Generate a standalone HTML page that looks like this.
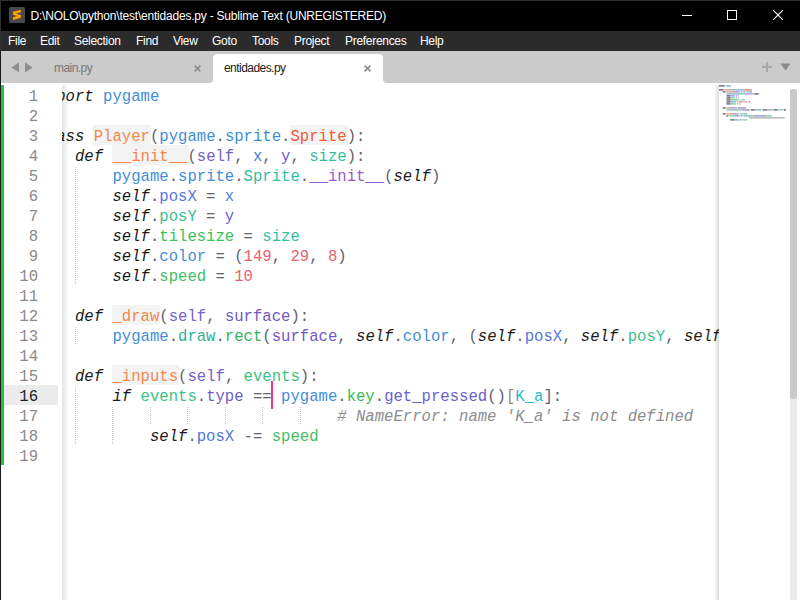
<!DOCTYPE html>
<html><head><meta charset="utf-8">
<style>
html,body{margin:0;padding:0;}
body{width:800px;height:600px;overflow:hidden;position:relative;background:#fff;font-family:"Liberation Sans",sans-serif;}
.abs{position:absolute;}
#title{position:absolute;left:0;top:0;width:800px;height:31px;background:#000;}
#menubar{position:absolute;left:0;top:31px;width:800px;height:20px;background:#2b2b2b;}
.menu{position:absolute;top:0;height:20px;line-height:21px;color:#fff;font-size:12px;letter-spacing:-0.3px;white-space:nowrap;}
#tabbar{position:absolute;left:0;top:51px;width:800px;height:32px;background:#cbcbcb;}
#editor{position:absolute;left:0;top:83px;width:800px;height:517px;background:#fff;}
.ln{position:absolute;left:37.5px;height:20px;line-height:20px;font-family:"Liberation Mono",monospace;font-size:15.625px;white-space:pre;color:#333;}
.bg{position:absolute;height:20px;background:#f3f3f3;}
.guide{position:absolute;width:1px;background:repeating-linear-gradient(to bottom,#c4c4c4 0,#c4c4c4 1px,transparent 1px,transparent 2px);}
.num{position:absolute;left:0;width:38px;text-align:right;height:20px;line-height:20px;font-family:"Liberation Mono",monospace;font-size:15.625px;color:#8a8a8a;}
.num.cur{color:#1e1e1e;}
#codeclip{position:absolute;left:62px;top:83px;width:657px;height:517px;overflow:hidden;}
#codeinner{position:absolute;left:-62px;top:-83px;width:800px;height:600px;}
</style></head>
<body>
<!-- title bar -->
<div id="title">
  <div class="abs" style="left:0;top:0;width:800px;height:1px;background:#2e2e2e"></div>
  <svg class="abs" style="left:9px;top:7px" width="16" height="16" viewBox="0 0 16 16">
    <rect x="0" y="0" width="16" height="16" rx="1.5" fill="#4a4a4a"/>
    <path d="M4 4.83 L11.83 2.67 L11.83 5.33 L7 6.67 L11.83 8 L11.83 10.67 L4 13 L4 10.17 L8 9 L4 7.83 Z" fill="#ff9f00"/>
  </svg>
  <div class="abs" style="left:30.5px;top:1px;height:31px;line-height:31px;color:#fff;font-size:12px;letter-spacing:-0.21px;white-space:nowrap">D:\NOLO\python\test\entidades.py - Sublime Text (UNREGISTERED)</div>
  <div class="abs" style="left:682px;top:15px;width:10px;height:1px;background:#fff"></div>
  <div class="abs" style="left:727px;top:10px;width:8px;height:8px;border:1px solid #fff"></div>
  <svg class="abs" style="left:773px;top:10px" width="10" height="10" viewBox="0 0 10 10"><path d="M0 0 L10 10 M10 0 L0 10" stroke="#fff" stroke-width="1.1"/></svg>
</div>
<!-- menu -->
<div id="menubar">
  <div class="menu" style="left:8px">File</div>
  <div class="menu" style="left:40px">Edit</div>
  <div class="menu" style="left:74px">Selection</div>
  <div class="menu" style="left:136px">Find</div>
  <div class="menu" style="left:173px">View</div>
  <div class="menu" style="left:212px">Goto</div>
  <div class="menu" style="left:252px">Tools</div>
  <div class="menu" style="left:294px">Project</div>
  <div class="menu" style="left:345px">Preferences</div>
  <div class="menu" style="left:420px">Help</div>
</div>
<div class="abs" style="left:0;top:0;width:1px;height:51px;background:#2e2e2e"></div>
<!-- tabs -->
<div id="tabbar">
  <div class="abs" style="left:0;top:0;width:1px;height:32px;background:#1a1a1a"></div>
  <svg class="abs" style="left:11px;top:10.5px" width="22" height="11" viewBox="0 0 22 11">
    <path d="M0.3 5.5 L8 0.5 L8 10.5 Z" fill="#8f8f8f"/>
    <path d="M14 0.5 L21.7 5.5 L14 10.5 Z" fill="#8f8f8f"/>
  </svg>
  <div class="abs" style="left:54px;top:0;height:32px;line-height:34px;color:#777;font-size:12px;letter-spacing:-0.55px">main.py</div>
  <svg class="abs" style="left:194px;top:14px" width="7" height="7" viewBox="0 0 7 7"><path d="M0.6 0.6 L6.4 6.4 M6.4 0.6 L0.6 6.4" stroke="#8f8f8f" stroke-width="1.7"/></svg>
  <!-- active tab -->
  <svg class="abs" style="left:209px;top:3px" width="178" height="29" viewBox="0 0 178 29">
    <path d="M0 29 Q4 29 4 25 L4 4 Q4 0 8 0 L170 0 Q174 0 174 4 L174 25 Q174 29 178 29 Z" fill="#fff"/>
  </svg>
  <div class="abs" style="left:224px;top:0;height:32px;line-height:34px;color:#222;font-size:12px;letter-spacing:-0.55px">entidades.py</div>
  <svg class="abs" style="left:364px;top:14px" width="7" height="7" viewBox="0 0 7 7"><path d="M0.6 0.6 L6.4 6.4 M6.4 0.6 L0.6 6.4" stroke="#8f8f8f" stroke-width="1.7"/></svg>
  <svg class="abs" style="left:762px;top:11px" width="10" height="10" viewBox="0 0 10 10"><path d="M5 0 V10 M0 5 H10" stroke="#a9a9a9" stroke-width="2"/></svg>
  <svg class="abs" style="left:780px;top:12px" width="11" height="8" viewBox="0 0 11 8"><path d="M0.5 0.5 L10.5 0.5 L5.5 7.5 Z" fill="#8a8a8a"/></svg>
</div>
<!-- editor -->
<div id="editor"></div>
<div class="abs" style="left:0;top:83px;width:1px;height:517px;background:#1a1a1a"></div>
<div class="abs" style="left:1px;top:85px;width:3px;height:380px;background:#22c23a"></div>
<div class="abs" style="left:5px;top:385px;width:53px;height:20px;background:#ebebeb"></div>
<div class="num" style="top:87px">1</div>
<div class="num" style="top:107px">2</div>
<div class="num" style="top:127px">3</div>
<div class="num" style="top:147px">4</div>
<div class="num" style="top:167px">5</div>
<div class="num" style="top:187px">6</div>
<div class="num" style="top:207px">7</div>
<div class="num" style="top:227px">8</div>
<div class="num" style="top:247px">9</div>
<div class="num" style="top:267px">10</div>
<div class="num" style="top:287px">11</div>
<div class="num" style="top:307px">12</div>
<div class="num" style="top:327px">13</div>
<div class="num" style="top:347px">14</div>
<div class="num" style="top:367px">15</div>
<div class="num cur" style="top:387px">16</div>
<div class="num" style="top:407px">17</div>
<div class="num" style="top:427px">18</div>
<div class="num" style="top:447px">19</div>
<div id="codeclip"><div id="codeinner">
<div class="abs" style="left:62px;top:85px;width:6px;height:515px;background:linear-gradient(to right,#e2e2e2,rgba(255,255,255,0))"></div>
<div class="abs" style="left:714px;top:85px;width:5px;height:515px;background:linear-gradient(to left,#dcdcdc,rgba(255,255,255,0))"></div>
<div class="ln" style="top:87px"><span style="color:#1a1a1a;font-style:italic">import</span>&#32;<span style="color:#3f8ed6">pygame</span></div>
<div class="ln" style="top:107px"></div>
<div class="bg" style="left:92.750px;top:125px;width:58.250px"></div>
<div class="bg" style="left:289.625px;top:125px;width:58.250px"></div>
<div class="ln" style="top:127px"><span style="color:#1a1a1a;font-style:italic">class</span>&#32;<span style="color:#f2884e">Player</span><span style="color:#626270">(</span><span style="color:#3f8ed6">pygame</span><span style="color:#626270">.</span><span style="color:#3f8ed6">sprite</span><span style="color:#626270">.</span><span style="color:#ef5a3a">Sprite</span><span style="color:#626270">)</span><span style="color:#626270">:</span></div>
<div class="bg" style="left:111.500px;top:145px;width:77.000px"></div>
<div class="ln" style="top:147px">&#32;&#32;&#32;&#32;<span style="color:#1a1a1a;font-style:italic">def</span>&#32;<span style="color:#f2884e">__init__</span><span style="color:#626270">(</span><span style="color:#7462c9">self</span><span style="color:#626270">,&#32;</span><span style="color:#527cda">x</span><span style="color:#626270">,&#32;</span><span style="color:#6a5bd0">y</span><span style="color:#626270">,&#32;</span><span style="color:#34bf9e">size</span><span style="color:#626270">)</span><span style="color:#626270">:</span></div>
<div class="ln" style="top:167px">&#32;&#32;&#32;&#32;&#32;&#32;&#32;&#32;<span style="color:#3f8ed6">pygame</span><span style="color:#626270">.</span><span style="color:#3f8ed6">sprite</span><span style="color:#626270">.</span><span style="color:#2fc0a2">Sprite</span><span style="color:#626270">.</span><span style="color:#9a5ad2">__init__</span><span style="color:#626270">(</span><span style="color:#1a1a1a;font-style:italic">self</span><span style="color:#626270">)</span></div>
<div class="ln" style="top:187px">&#32;&#32;&#32;&#32;&#32;&#32;&#32;&#32;<span style="color:#1a1a1a;font-style:italic">self</span><span style="color:#626270">.</span><span style="color:#5276da">posX</span><span style="color:#626270">&#32;=&#32;</span><span style="color:#527cda">x</span></div>
<div class="ln" style="top:207px">&#32;&#32;&#32;&#32;&#32;&#32;&#32;&#32;<span style="color:#1a1a1a;font-style:italic">self</span><span style="color:#626270">.</span><span style="color:#39c08e">posY</span><span style="color:#626270">&#32;=&#32;</span><span style="color:#6a5bd0">y</span></div>
<div class="ln" style="top:227px">&#32;&#32;&#32;&#32;&#32;&#32;&#32;&#32;<span style="color:#1a1a1a;font-style:italic">self</span><span style="color:#626270">.</span><span style="color:#3ac158">tilesize</span><span style="color:#626270">&#32;=&#32;</span><span style="color:#34bf9e">size</span></div>
<div class="ln" style="top:247px">&#32;&#32;&#32;&#32;&#32;&#32;&#32;&#32;<span style="color:#1a1a1a;font-style:italic">self</span><span style="color:#626270">.</span><span style="color:#3f8fd4">color</span><span style="color:#626270">&#32;=&#32;</span><span style="color:#626270">(</span><span style="color:#e8626c">149</span><span style="color:#626270">,&#32;</span><span style="color:#e8626c">29</span><span style="color:#626270">,&#32;</span><span style="color:#e8626c">8</span><span style="color:#626270">)</span></div>
<div class="ln" style="top:267px">&#32;&#32;&#32;&#32;&#32;&#32;&#32;&#32;<span style="color:#1a1a1a;font-style:italic">self</span><span style="color:#626270">.</span><span style="color:#41bf63">speed</span><span style="color:#626270">&#32;=&#32;</span><span style="color:#e8626c">10</span></div>
<div class="ln" style="top:287px"></div>
<div class="bg" style="left:111.500px;top:305px;width:48.875px"></div>
<div class="ln" style="top:307px">&#32;&#32;&#32;&#32;<span style="color:#1a1a1a;font-style:italic">def</span>&#32;<span style="color:#f2884e">_draw</span><span style="color:#626270">(</span><span style="color:#7462c9">self</span><span style="color:#626270">,&#32;</span><span style="color:#7058c4">surface</span><span style="color:#626270">)</span><span style="color:#626270">:</span></div>
<div class="ln" style="top:327px">&#32;&#32;&#32;&#32;&#32;&#32;&#32;&#32;<span style="color:#3f8ed6">pygame</span><span style="color:#626270">.</span><span style="color:#30b190">draw</span><span style="color:#626270">.</span><span style="color:#33b262">rect</span><span style="color:#626270">(</span><span style="color:#7058c4">surface</span><span style="color:#626270">,&#32;</span><span style="color:#1a1a1a;font-style:italic">self</span><span style="color:#626270">.</span><span style="color:#3f8fd4">color</span><span style="color:#626270">,&#32;</span><span style="color:#626270">(</span><span style="color:#1a1a1a;font-style:italic">self</span><span style="color:#626270">.</span><span style="color:#5276da">posX</span><span style="color:#626270">,&#32;</span><span style="color:#1a1a1a;font-style:italic">self</span><span style="color:#626270">.</span><span style="color:#39c08e">posY</span><span style="color:#626270">,&#32;</span><span style="color:#1a1a1a;font-style:italic">self</span><span style="color:#626270">.</span><span style="color:#3ac158">tilesize</span><span style="color:#626270">,&#32;</span><span style="color:#1a1a1a;font-style:italic">self</span><span style="color:#626270">.</span><span style="color:#3ac158">tilesize</span><span style="color:#626270">)</span><span style="color:#626270">)</span></div>
<div class="ln" style="top:347px"></div>
<div class="bg" style="left:111.500px;top:365px;width:67.625px"></div>
<div class="ln" style="top:367px">&#32;&#32;&#32;&#32;<span style="color:#1a1a1a;font-style:italic">def</span>&#32;<span style="color:#f2884e">_inputs</span><span style="color:#626270">(</span><span style="color:#7462c9">self</span><span style="color:#626270">,&#32;</span><span style="color:#3cc382">events</span><span style="color:#626270">)</span><span style="color:#626270">:</span></div>
<div class="ln" style="top:387px">&#32;&#32;&#32;&#32;&#32;&#32;&#32;&#32;<span style="color:#1a1a1a;font-style:italic">if</span>&#32;<span style="color:#3cc382">events</span><span style="color:#626270">.</span><span style="color:#6c60cc">type</span><span style="color:#626270">&#32;==&#32;</span><span style="color:#3f8ed6">pygame</span><span style="color:#626270">.</span><span style="color:#3dba56">key</span><span style="color:#626270">.</span><span style="color:#6a5fcf">get_pressed</span><span style="color:#626270">()</span><span style="color:#a08a6a">[</span><span style="color:#1fbcc8">K_a</span><span style="color:#626270">]</span><span style="color:#626270">:</span></div>
<div class="ln" style="top:407px">&#32;&#32;&#32;&#32;&#32;&#32;&#32;&#32;&#32;&#32;&#32;&#32;&#32;&#32;&#32;&#32;&#32;&#32;&#32;&#32;&#32;&#32;&#32;&#32;&#32;&#32;&#32;&#32;&#32;&#32;&#32;&#32;<span style="color:#8c8c8c;font-style:italic">#&#32;NameError:&#32;name&#32;&#x27;K_a&#x27;&#32;is&#32;not&#32;defined</span></div>
<div class="ln" style="top:427px">&#32;&#32;&#32;&#32;&#32;&#32;&#32;&#32;&#32;&#32;&#32;&#32;<span style="color:#1a1a1a;font-style:italic">self</span><span style="color:#626270">.</span><span style="color:#5276da">posX</span><span style="color:#626270">&#32;-=&#32;</span><span style="color:#41bf63">speed</span></div>
<div class="ln" style="top:447px"></div>
<div class="guide" style="left:75px;top:167px;height:118px"></div>
<div class="guide" style="left:75px;top:327px;height:18px"></div>
<div class="guide" style="left:75px;top:387px;height:58px"></div>
<div class="guide" style="left:112px;top:407px;height:38px"></div>
<div class="guide" style="left:150px;top:407px;height:18px"></div>
<div class="guide" style="left:187px;top:407px;height:18px"></div>
<div class="guide" style="left:225px;top:407px;height:18px"></div>
<div class="guide" style="left:262px;top:407px;height:18px"></div>
<div class="guide" style="left:300px;top:407px;height:18px"></div>
<div class="abs" style="left:271px;top:381px;width:2px;height:28px;background:#f43584"></div>
</div></div>
<!-- minimap -->
<div class="abs" style="left:719px;top:83px;width:71px;height:517px;background:#fff;overflow:hidden">
<svg class="abs" style="left:0;top:2px" width="71" height="60">
<rect x="0.00" y="0" width="5.62" height="1.7" fill="#1a1a1a" fill-opacity="0.55"/>
<rect x="6.56" y="0" width="5.62" height="1.7" fill="#3f8ed6" fill-opacity="0.55"/>
<rect x="0.00" y="4" width="4.69" height="1.7" fill="#1a1a1a" fill-opacity="0.55"/>
<rect x="5.62" y="4" width="5.62" height="2" fill="#e6e6e6"/>
<rect x="5.62" y="4" width="5.62" height="1.7" fill="#f2884e" fill-opacity="0.55"/>
<rect x="11.25" y="4" width="0.94" height="1.7" fill="#626270" fill-opacity="0.55"/>
<rect x="12.19" y="4" width="5.62" height="1.7" fill="#3f8ed6" fill-opacity="0.55"/>
<rect x="17.81" y="4" width="0.94" height="1.7" fill="#626270" fill-opacity="0.55"/>
<rect x="18.75" y="4" width="5.62" height="1.7" fill="#3f8ed6" fill-opacity="0.55"/>
<rect x="24.38" y="4" width="0.94" height="1.7" fill="#626270" fill-opacity="0.55"/>
<rect x="25.31" y="4" width="5.62" height="2" fill="#e6e6e6"/>
<rect x="25.31" y="4" width="5.62" height="1.7" fill="#ef5a3a" fill-opacity="0.55"/>
<rect x="30.94" y="4" width="0.94" height="1.7" fill="#626270" fill-opacity="0.55"/>
<rect x="31.88" y="4" width="0.94" height="1.7" fill="#626270" fill-opacity="0.55"/>
<rect x="3.75" y="6" width="2.81" height="1.7" fill="#1a1a1a" fill-opacity="0.55"/>
<rect x="7.50" y="6" width="7.50" height="2" fill="#e6e6e6"/>
<rect x="7.50" y="6" width="7.50" height="1.7" fill="#f2884e" fill-opacity="0.55"/>
<rect x="15.00" y="6" width="0.94" height="1.7" fill="#626270" fill-opacity="0.55"/>
<rect x="15.94" y="6" width="3.75" height="1.7" fill="#7462c9" fill-opacity="0.55"/>
<rect x="19.69" y="6" width="0.94" height="1.7" fill="#626270" fill-opacity="0.55"/>
<rect x="21.56" y="6" width="0.94" height="1.7" fill="#527cda" fill-opacity="0.55"/>
<rect x="22.50" y="6" width="0.94" height="1.7" fill="#626270" fill-opacity="0.55"/>
<rect x="24.38" y="6" width="0.94" height="1.7" fill="#6a5bd0" fill-opacity="0.55"/>
<rect x="25.31" y="6" width="0.94" height="1.7" fill="#626270" fill-opacity="0.55"/>
<rect x="27.19" y="6" width="3.75" height="1.7" fill="#34bf9e" fill-opacity="0.55"/>
<rect x="30.94" y="6" width="0.94" height="1.7" fill="#626270" fill-opacity="0.55"/>
<rect x="31.88" y="6" width="0.94" height="1.7" fill="#626270" fill-opacity="0.55"/>
<rect x="7.50" y="8" width="5.62" height="1.7" fill="#3f8ed6" fill-opacity="0.55"/>
<rect x="13.12" y="8" width="0.94" height="1.7" fill="#626270" fill-opacity="0.55"/>
<rect x="14.06" y="8" width="5.62" height="1.7" fill="#3f8ed6" fill-opacity="0.55"/>
<rect x="19.69" y="8" width="0.94" height="1.7" fill="#626270" fill-opacity="0.55"/>
<rect x="20.62" y="8" width="5.62" height="1.7" fill="#2fc0a2" fill-opacity="0.55"/>
<rect x="26.25" y="8" width="0.94" height="1.7" fill="#626270" fill-opacity="0.55"/>
<rect x="27.19" y="8" width="7.50" height="1.7" fill="#9a5ad2" fill-opacity="0.55"/>
<rect x="34.69" y="8" width="0.94" height="1.7" fill="#626270" fill-opacity="0.55"/>
<rect x="35.62" y="8" width="3.75" height="1.7" fill="#1a1a1a" fill-opacity="0.55"/>
<rect x="39.38" y="8" width="0.94" height="1.7" fill="#626270" fill-opacity="0.55"/>
<rect x="7.50" y="10" width="3.75" height="1.7" fill="#1a1a1a" fill-opacity="0.55"/>
<rect x="11.25" y="10" width="0.94" height="1.7" fill="#626270" fill-opacity="0.55"/>
<rect x="12.19" y="10" width="3.75" height="1.7" fill="#5276da" fill-opacity="0.55"/>
<rect x="16.88" y="10" width="0.94" height="1.7" fill="#626270" fill-opacity="0.55"/>
<rect x="18.75" y="10" width="0.94" height="1.7" fill="#527cda" fill-opacity="0.55"/>
<rect x="7.50" y="12" width="3.75" height="1.7" fill="#1a1a1a" fill-opacity="0.55"/>
<rect x="11.25" y="12" width="0.94" height="1.7" fill="#626270" fill-opacity="0.55"/>
<rect x="12.19" y="12" width="3.75" height="1.7" fill="#39c08e" fill-opacity="0.55"/>
<rect x="16.88" y="12" width="0.94" height="1.7" fill="#626270" fill-opacity="0.55"/>
<rect x="18.75" y="12" width="0.94" height="1.7" fill="#6a5bd0" fill-opacity="0.55"/>
<rect x="7.50" y="14" width="3.75" height="1.7" fill="#1a1a1a" fill-opacity="0.55"/>
<rect x="11.25" y="14" width="0.94" height="1.7" fill="#626270" fill-opacity="0.55"/>
<rect x="12.19" y="14" width="7.50" height="1.7" fill="#3ac158" fill-opacity="0.55"/>
<rect x="20.62" y="14" width="0.94" height="1.7" fill="#626270" fill-opacity="0.55"/>
<rect x="22.50" y="14" width="3.75" height="1.7" fill="#34bf9e" fill-opacity="0.55"/>
<rect x="7.50" y="16" width="3.75" height="1.7" fill="#1a1a1a" fill-opacity="0.55"/>
<rect x="11.25" y="16" width="0.94" height="1.7" fill="#626270" fill-opacity="0.55"/>
<rect x="12.19" y="16" width="4.69" height="1.7" fill="#3f8fd4" fill-opacity="0.55"/>
<rect x="17.81" y="16" width="0.94" height="1.7" fill="#626270" fill-opacity="0.55"/>
<rect x="19.69" y="16" width="0.94" height="1.7" fill="#626270" fill-opacity="0.55"/>
<rect x="20.62" y="16" width="2.81" height="1.7" fill="#e8626c" fill-opacity="0.55"/>
<rect x="23.44" y="16" width="0.94" height="1.7" fill="#626270" fill-opacity="0.55"/>
<rect x="25.31" y="16" width="1.88" height="1.7" fill="#e8626c" fill-opacity="0.55"/>
<rect x="27.19" y="16" width="0.94" height="1.7" fill="#626270" fill-opacity="0.55"/>
<rect x="29.06" y="16" width="0.94" height="1.7" fill="#e8626c" fill-opacity="0.55"/>
<rect x="30.00" y="16" width="0.94" height="1.7" fill="#626270" fill-opacity="0.55"/>
<rect x="7.50" y="18" width="3.75" height="1.7" fill="#1a1a1a" fill-opacity="0.55"/>
<rect x="11.25" y="18" width="0.94" height="1.7" fill="#626270" fill-opacity="0.55"/>
<rect x="12.19" y="18" width="4.69" height="1.7" fill="#41bf63" fill-opacity="0.55"/>
<rect x="17.81" y="18" width="0.94" height="1.7" fill="#626270" fill-opacity="0.55"/>
<rect x="19.69" y="18" width="1.88" height="1.7" fill="#e8626c" fill-opacity="0.55"/>
<rect x="3.75" y="22" width="2.81" height="1.7" fill="#1a1a1a" fill-opacity="0.55"/>
<rect x="7.50" y="22" width="4.69" height="2" fill="#e6e6e6"/>
<rect x="7.50" y="22" width="4.69" height="1.7" fill="#f2884e" fill-opacity="0.55"/>
<rect x="12.19" y="22" width="0.94" height="1.7" fill="#626270" fill-opacity="0.55"/>
<rect x="13.12" y="22" width="3.75" height="1.7" fill="#7462c9" fill-opacity="0.55"/>
<rect x="16.88" y="22" width="0.94" height="1.7" fill="#626270" fill-opacity="0.55"/>
<rect x="18.75" y="22" width="6.56" height="1.7" fill="#7058c4" fill-opacity="0.55"/>
<rect x="25.31" y="22" width="0.94" height="1.7" fill="#626270" fill-opacity="0.55"/>
<rect x="26.25" y="22" width="0.94" height="1.7" fill="#626270" fill-opacity="0.55"/>
<rect x="7.50" y="24" width="5.62" height="1.7" fill="#3f8ed6" fill-opacity="0.55"/>
<rect x="13.12" y="24" width="0.94" height="1.7" fill="#626270" fill-opacity="0.55"/>
<rect x="14.06" y="24" width="3.75" height="1.7" fill="#30b190" fill-opacity="0.55"/>
<rect x="17.81" y="24" width="0.94" height="1.7" fill="#626270" fill-opacity="0.55"/>
<rect x="18.75" y="24" width="3.75" height="1.7" fill="#33b262" fill-opacity="0.55"/>
<rect x="22.50" y="24" width="0.94" height="1.7" fill="#626270" fill-opacity="0.55"/>
<rect x="23.44" y="24" width="6.56" height="1.7" fill="#7058c4" fill-opacity="0.55"/>
<rect x="30.00" y="24" width="0.94" height="1.7" fill="#626270" fill-opacity="0.55"/>
<rect x="31.88" y="24" width="3.75" height="1.7" fill="#1a1a1a" fill-opacity="0.55"/>
<rect x="35.62" y="24" width="0.94" height="1.7" fill="#626270" fill-opacity="0.55"/>
<rect x="36.56" y="24" width="4.69" height="1.7" fill="#3f8fd4" fill-opacity="0.55"/>
<rect x="41.25" y="24" width="0.94" height="1.7" fill="#626270" fill-opacity="0.55"/>
<rect x="43.12" y="24" width="0.94" height="1.7" fill="#626270" fill-opacity="0.55"/>
<rect x="44.06" y="24" width="3.75" height="1.7" fill="#1a1a1a" fill-opacity="0.55"/>
<rect x="47.81" y="24" width="0.94" height="1.7" fill="#626270" fill-opacity="0.55"/>
<rect x="48.75" y="24" width="3.75" height="1.7" fill="#5276da" fill-opacity="0.55"/>
<rect x="52.50" y="24" width="0.94" height="1.7" fill="#626270" fill-opacity="0.55"/>
<rect x="54.38" y="24" width="3.75" height="1.7" fill="#1a1a1a" fill-opacity="0.55"/>
<rect x="58.12" y="24" width="0.94" height="1.7" fill="#626270" fill-opacity="0.55"/>
<rect x="59.06" y="24" width="3.75" height="1.7" fill="#39c08e" fill-opacity="0.55"/>
<rect x="62.81" y="24" width="0.94" height="1.7" fill="#626270" fill-opacity="0.55"/>
<rect x="64.69" y="24" width="2.31" height="1.7" fill="#1a1a1a" fill-opacity="0.55"/>
<rect x="3.75" y="28" width="2.81" height="1.7" fill="#1a1a1a" fill-opacity="0.55"/>
<rect x="7.50" y="28" width="6.56" height="2" fill="#e6e6e6"/>
<rect x="7.50" y="28" width="6.56" height="1.7" fill="#f2884e" fill-opacity="0.55"/>
<rect x="14.06" y="28" width="0.94" height="1.7" fill="#626270" fill-opacity="0.55"/>
<rect x="15.00" y="28" width="3.75" height="1.7" fill="#7462c9" fill-opacity="0.55"/>
<rect x="18.75" y="28" width="0.94" height="1.7" fill="#626270" fill-opacity="0.55"/>
<rect x="20.62" y="28" width="5.62" height="1.7" fill="#3cc382" fill-opacity="0.55"/>
<rect x="26.25" y="28" width="0.94" height="1.7" fill="#626270" fill-opacity="0.55"/>
<rect x="27.19" y="28" width="0.94" height="1.7" fill="#626270" fill-opacity="0.55"/>
<rect x="7.50" y="30" width="1.88" height="1.7" fill="#1a1a1a" fill-opacity="0.55"/>
<rect x="10.31" y="30" width="5.62" height="1.7" fill="#3cc382" fill-opacity="0.55"/>
<rect x="15.94" y="30" width="0.94" height="1.7" fill="#626270" fill-opacity="0.55"/>
<rect x="16.88" y="30" width="3.75" height="1.7" fill="#6c60cc" fill-opacity="0.55"/>
<rect x="21.56" y="30" width="1.88" height="1.7" fill="#626270" fill-opacity="0.55"/>
<rect x="24.38" y="30" width="5.62" height="1.7" fill="#3f8ed6" fill-opacity="0.55"/>
<rect x="30.00" y="30" width="0.94" height="1.7" fill="#626270" fill-opacity="0.55"/>
<rect x="30.94" y="30" width="2.81" height="1.7" fill="#3dba56" fill-opacity="0.55"/>
<rect x="33.75" y="30" width="0.94" height="1.7" fill="#626270" fill-opacity="0.55"/>
<rect x="34.69" y="30" width="10.31" height="1.7" fill="#6a5fcf" fill-opacity="0.55"/>
<rect x="45.00" y="30" width="1.88" height="1.7" fill="#626270" fill-opacity="0.55"/>
<rect x="46.88" y="30" width="0.94" height="1.7" fill="#a08a6a" fill-opacity="0.55"/>
<rect x="47.81" y="30" width="2.81" height="1.7" fill="#1fbcc8" fill-opacity="0.55"/>
<rect x="50.62" y="30" width="0.94" height="1.7" fill="#626270" fill-opacity="0.55"/>
<rect x="51.56" y="30" width="0.94" height="1.7" fill="#626270" fill-opacity="0.55"/>
<rect x="30.00" y="32" width="35.62" height="1.7" fill="#8c8c8c" fill-opacity="0.55"/>
<rect x="11.25" y="34" width="3.75" height="1.7" fill="#1a1a1a" fill-opacity="0.55"/>
<rect x="15.00" y="34" width="0.94" height="1.7" fill="#626270" fill-opacity="0.55"/>
<rect x="15.94" y="34" width="3.75" height="1.7" fill="#5276da" fill-opacity="0.55"/>
<rect x="20.62" y="34" width="1.88" height="1.7" fill="#626270" fill-opacity="0.55"/>
<rect x="23.44" y="34" width="4.69" height="1.7" fill="#41bf63" fill-opacity="0.55"/>
</svg>
</div>
<!-- scrollbar -->
<div class="abs" style="left:790px;top:89px;width:7px;height:511px;background:#ebebeb;border-radius:2px 2px 0 0"></div>
<div class="abs" style="left:790px;top:89px;width:7px;height:310px;background:#c9c9c9;border-radius:3px"></div>
</body></html>
